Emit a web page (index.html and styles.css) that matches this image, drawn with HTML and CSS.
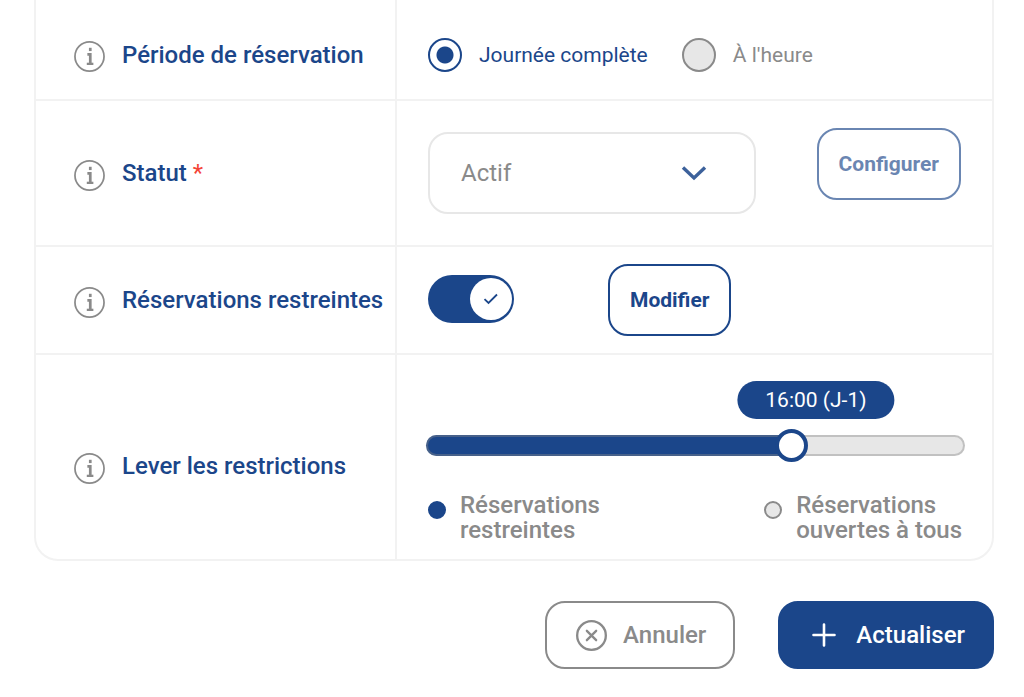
FILE: index.html
```html
<!DOCTYPE html>
<html lang="fr">

<head>
    <meta charset="UTF-8">
    <meta name="viewport" content="width=device-width, initial-scale=1.0">
    <title>Réservation</title>
    <link rel="stylesheet" href="styles.css">
</head>

<body>
    <!-- Shared info icon -->
    <svg class="sprite" aria-hidden="true">
        <symbol id="icon-info" viewBox="0 0 32 32">
            <circle cx="16" cy="16" r="15" stroke-width="1.8" />
            <path d="M16.8 7v3.4" stroke-width="2.8" />
            <path d="M13.8 13.8h3v9.6" stroke-width="2.8" />
            <path d="M13.2 23.6h6.8" stroke-width="2.4" />
        </symbol>
    </svg>

    <form class="settings">
        <div class="panel">
            <div class="row row-period">
                <div class="cell-label">
                    <svg class="info"><use href="#icon-info" /></svg>
                    <span id="period-label">Période de réservation</span>
                </div>
                <div class="cell-value" role="radiogroup" aria-labelledby="period-label">
                    <label class="radio">
                        <input type="radio" name="period" value="day" checked>
                        <span>Journée complète</span>
                    </label>
                    <label class="radio">
                        <input type="radio" name="period" value="hour">
                        <span>À l'heure</span>
                    </label>
                </div>
            </div>

            <div class="row row-status">
                <div class="cell-label">
                    <svg class="info"><use href="#icon-info" /></svg>
                    <label for="status">Statut <span class="required">*</span></label>
                </div>
                <div class="cell-value">
                    <div class="select">
                        <select id="status" name="status">
                            <option>Actif</option>
                            <option>Inactif</option>
                        </select>
                        <svg class="chevron" viewBox="0 0 26 16"><path d="M2 2.5 13 13 24 2.5" /></svg>
                    </div>
                    <button type="button" class="btn btn-outline btn-faded">Configurer</button>
                </div>
            </div>

            <div class="row row-restricted">
                <div class="cell-label">
                    <svg class="info"><use href="#icon-info" /></svg>
                    <label for="restricted">Réservations restreintes</label>
                </div>
                <div class="cell-value">
                    <div class="toggle">
                        <input type="checkbox" id="restricted" name="restricted" checked>
                        <span class="knob">
                            <svg viewBox="0 0 16 12"><path d="M1.5 6.2 5.5 10 14 1.5" /></svg>
                        </span>
                    </div>
                    <button type="button" class="btn btn-outline">Modifier</button>
                </div>
            </div>

            <div class="row row-lift">
                <div class="cell-label">
                    <svg class="info"><use href="#icon-info" /></svg>
                    <label for="lift">Lever les restrictions</label>
                </div>
                <div class="cell-value">
                    <div class="slider" style="--value: 69%">
                        <output class="bubble" for="lift">16:00 (J-1)</output>
                        <input type="range" id="lift" name="lift" min="0" max="100" value="69">
                    </div>
                    <div class="legend">
                        <div class="legend-item">
                            <span class="dot dot-on"></span>
                            <span>Réservations<br>restreintes</span>
                        </div>
                        <div class="legend-item">
                            <span class="dot"></span>
                            <span>Réservations<br>ouvertes à tous</span>
                        </div>
                    </div>
                </div>
            </div>
        </div>

        <div class="actions">
            <button type="reset" class="btn btn-large btn-cancel">
                <svg class="icon-cancel" viewBox="0 0 32 32">
                    <circle cx="16" cy="16" r="14.8" />
                    <path d="M11.2 11.2 20.8 20.8M20.8 11.2 11.2 20.8" />
                </svg>
                Annuler
            </button>
            <button type="submit" class="btn btn-large btn-primary">
                <svg class="icon-plus" viewBox="0 0 24 24"><path d="M12 1.5v21M1.5 12h21" /></svg>
                Actualiser
            </button>
        </div>
    </form>
</body>

</html>
```

FILE: styles.css
```css
/* General Styles */
:root {
    --blue: #1b468a;
    --grey: #8a8a8a;
    --light: #e7e7e7;
    --line: #f2f2f2;
}

* {
    box-sizing: border-box;
}

body {
    font-family: Roboto, sans-serif;
    background-color: #fff;
    color: var(--blue);
    margin: 0;
}

svg {
    display: block;
    flex: none;
    fill: none;
    stroke: currentColor;
}

.sprite {
    position: absolute;
    width: 0;
    height: 0;
}

.settings {
    padding: 0 30px 28px 34px;
}

/* Panel */
.panel {
    border: 2px solid var(--line);
    border-top: none;
    border-radius: 0 0 24px 24px;
}

.row {
    display: grid;
    grid-template-columns: 361px 1fr;
}

.row + .row {
    border-top: 2px solid var(--line);
}

.cell-label {
    display: flex;
    align-items: center;
    gap: 17px;
    padding-left: 38px;
    border-right: 2px solid var(--line);
    font-size: 24px;
    line-height: 28px;
    font-weight: 500;
    white-space: nowrap;
}

.cell-value {
    display: flex;
    align-items: center;
    padding: 0 31px;
}

.info {
    width: 31px;
    height: 31px;
    margin-top: 4px;
    color: var(--grey);
}

.required {
    color: #f44336;
    font-weight: 400;
}

.row-period {
    min-height: 99px;
}

.row-period .cell-label,
.row-period .cell-value {
    padding-top: 10px;
}

.row-status {
    min-height: 146px;
}

.row-restricted {
    min-height: 108px;
}

/* Radio buttons */
.radio {
    display: flex;
    align-items: center;
    gap: 17px;
    margin-right: 34px;
    font-size: 21px;
    color: var(--grey);
    white-space: nowrap;
}

.radio input {
    appearance: none;
    width: 34px;
    height: 34px;
    margin: 0;
    border: 2px solid var(--grey);
    border-radius: 50%;
    background-color: var(--light);
}

.radio input:checked {
    border-color: var(--blue);
    background: radial-gradient(circle, var(--blue) 8px, #fff 9px);
}

.radio input:checked + span {
    color: var(--blue);
}

/* Select */
.select {
    position: relative;
    flex: 0 1 328px;
    margin-right: 61px;
}

.select select {
    appearance: none;
    width: 100%;
    height: 82px;
    padding: 0 31px;
    border: 2px solid var(--light);
    border-radius: 20px;
    background-color: #fff;
    color: var(--grey);
    font-family: inherit;
    font-size: 24px;
}

.chevron {
    position: absolute;
    top: 33px;
    right: 49px;
    width: 26px;
    height: 16px;
    stroke-width: 3.4;
    opacity: 0.85;
    pointer-events: none;
}

/* Buttons */
.btn {
    border: 2px solid var(--blue);
    border-radius: 20px;
    background-color: #fff;
    color: var(--blue);
    font-family: inherit;
    font-weight: 500;
    cursor: pointer;
}

.btn-outline {
    height: 72px;
    padding: 0 20px;
    font-size: 21px;
    font-weight: 700;
}

.btn-faded {
    opacity: 0.65;
    margin-bottom: 18px;
}

.btn-large {
    display: flex;
    align-items: center;
    height: 68px;
    font-size: 24px;
}

/* Toggle */
.toggle {
    position: relative;
    margin-right: 94px;
}

.toggle input {
    display: block;
    appearance: none;
    width: 86px;
    height: 48px;
    margin: 0 0 3px;
    border-radius: 24px;
    background-color: var(--light);
}

.toggle input:checked {
    background-color: var(--blue);
}

.knob {
    position: absolute;
    top: 3px;
    right: 2px;
    display: grid;
    place-items: center;
    width: 42px;
    height: 42px;
    border-radius: 50%;
    background-color: #fff;
    pointer-events: none;
}

.knob svg {
    width: 16px;
    height: 12px;
    stroke-width: 1.8;
}

/* Slider */
.row-lift .cell-label {
    padding-top: 18px;
}

.row-lift .cell-value {
    display: block;
    padding: 26px 27px 16px 29px;
}

.slider {
    position: relative;
    padding-top: 48px;
}

.bubble {
    position: absolute;
    top: 0;
    left: calc(var(--value) + 18px);
    transform: translateX(-50%);
    padding: 0 28px;
    border-radius: 19px;
    background-color: var(--blue);
    color: #fff;
    font-size: 21px;
    line-height: 38px;
    white-space: nowrap;
}

.slider input {
    appearance: none;
    display: block;
    width: 100%;
    height: 33px;
    margin: 0;
    background: none;
}

.slider input::-webkit-slider-runnable-track {
    height: 21px;
    border-radius: 11px;
    background: linear-gradient(to right, var(--blue) var(--value), var(--light) var(--value));
    box-shadow: inset 0 0 0 2px rgba(138, 138, 138, 0.4);
}

.slider input::-webkit-slider-thumb {
    appearance: none;
    width: 33px;
    height: 33px;
    margin-top: -6px;
    border: 4px solid var(--blue);
    border-radius: 50%;
    background-color: #fff;
}

/* Legend */
.legend {
    display: flex;
    justify-content: space-between;
    margin-top: 31px;
    padding: 0 3px 0 2px;
    color: var(--grey);
    font-size: 24px;
    line-height: 25px;
    font-weight: 500;
}

.legend-item {
    display: flex;
    align-items: flex-start;
    gap: 14px;
}

.dot {
    flex: none;
    width: 18px;
    height: 18px;
    margin-top: 8px;
    border: 2px solid var(--grey);
    border-radius: 50%;
    background-color: var(--light);
}

.dot-on {
    border-color: var(--blue);
    background-color: var(--blue);
}

/* Actions */
.actions {
    display: flex;
    justify-content: flex-end;
    gap: 43px;
    margin-top: 40px;
}

.btn-cancel {
    gap: 16px;
    padding: 0 27px 0 29px;
    border-color: var(--grey);
    color: var(--grey);
}

.btn-primary {
    gap: 20px;
    padding: 0 27px 0 32px;
    background-color: var(--blue);
    color: #fff;
}

.icon-cancel {
    width: 31px;
    height: 31px;
    stroke-width: 2.4;
    stroke-linecap: round;
}

.icon-plus {
    width: 24px;
    height: 24px;
    stroke-width: 2.6;
    stroke-linecap: round;
}
```
